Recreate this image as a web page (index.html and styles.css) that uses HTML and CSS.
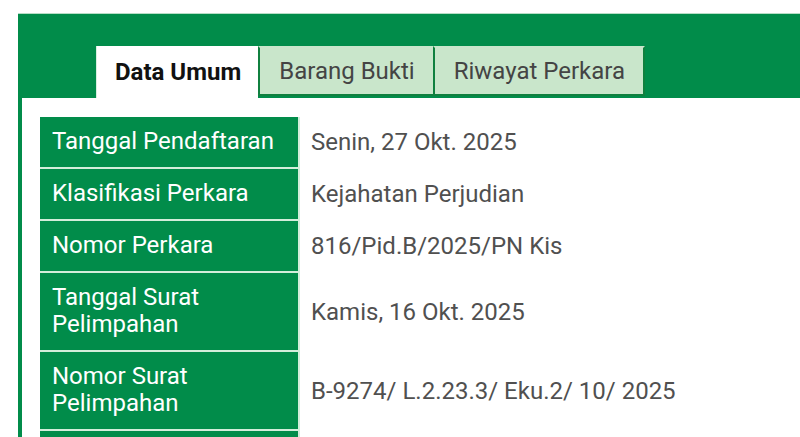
FILE: index.html
```html
<!DOCTYPE html>
<html lang="id">
<head>
<meta charset="utf-8">
<title>Detail Perkara</title>
<link rel="stylesheet" href="styles.css">
</head>
<body>
<div class="panel">
  <div class="tabs">
    <div class="tab active">Data Umum</div>
    <div class="tab">Barang Bukti</div>
    <div class="tab">Riwayat Perkara</div>
  </div>
  <div class="content">
    <table class="info">
      <tr><th>Tanggal Pendaftaran</th><td>Senin, 27 Okt. 2025</td></tr>
      <tr><th>Klasifikasi Perkara</th><td>Kejahatan Perjudian</td></tr>
      <tr><th>Nomor Perkara</th><td>816/Pid.B/2025/PN Kis</td></tr>
      <tr><th>Tanggal Surat Pelimpahan</th><td>Kamis, 16 Okt. 2025</td></tr>
      <tr><th>Nomor Surat Pelimpahan</th><td>B-9274/ L.2.23.3/ Eku.2/ 10/ 2025</td></tr>
      <tr><th>&nbsp;</th><td>&nbsp;</td></tr>
    </table>
  </div>
</div>
</body>
</html>
```
FILE: styles.css
```css
html, body {
  margin: 0;
  padding: 0;
  background: #ffffff;
  overflow: hidden;
  font-family: Roboto, "Liberation Sans", Arial, sans-serif;
}

.panel {
  margin: 13px 0 0 18px;
  border-top: 1px solid #b7dec6;
  background: #018c4a;
  padding-left: 4px;
  height: 600px;
}

.tabs {
  display: flex;
  align-items: flex-start;
  padding: 32px 0 0 74px;
}

.tab {
  box-sizing: border-box;
  height: 50px;
  margin-bottom: 2px;
  margin-left: -2px;
  padding: 0 18px 0 19px;
  display: flex;
  align-items: center;
  font-size: 24px;
  color: #444444;
  background: #c9e6cb;
  border: 2px solid #10803f;
  border-top-color: #c9e6cb;
}

.tab.active {
  height: 52px;
  margin-bottom: 0;
  margin-left: 0;
  padding: 0 17px 0 18px;
  background: #ffffff;
  border: none;
  border-left: 1px solid #d9efe0;
  color: #111111;
  font-weight: 700;
}

.tab.active + .tab {
  margin-left: 0;
}

.content {
  background: #ffffff;
  padding: 19px 0 0 18px;
  height: 520px;
}

.info {
  border-collapse: separate;
  border-spacing: 0;
  font-size: 24px;
  line-height: 27px;
}

.info th {
  box-sizing: border-box;
  width: 260px;
  text-align: left;
  font-weight: 400;
  color: #ffffff;
  background: #018c4a;
  padding: 11px 12px 12px 12px;
  border-right: 2px solid #d3eedb;
  border-bottom: 2px solid #d3eedb;
  vertical-align: middle;
}

.info td {
  padding: 11px 12px 12px 11px;
  color: #505050;
  vertical-align: middle;
  white-space: nowrap;
}
```
